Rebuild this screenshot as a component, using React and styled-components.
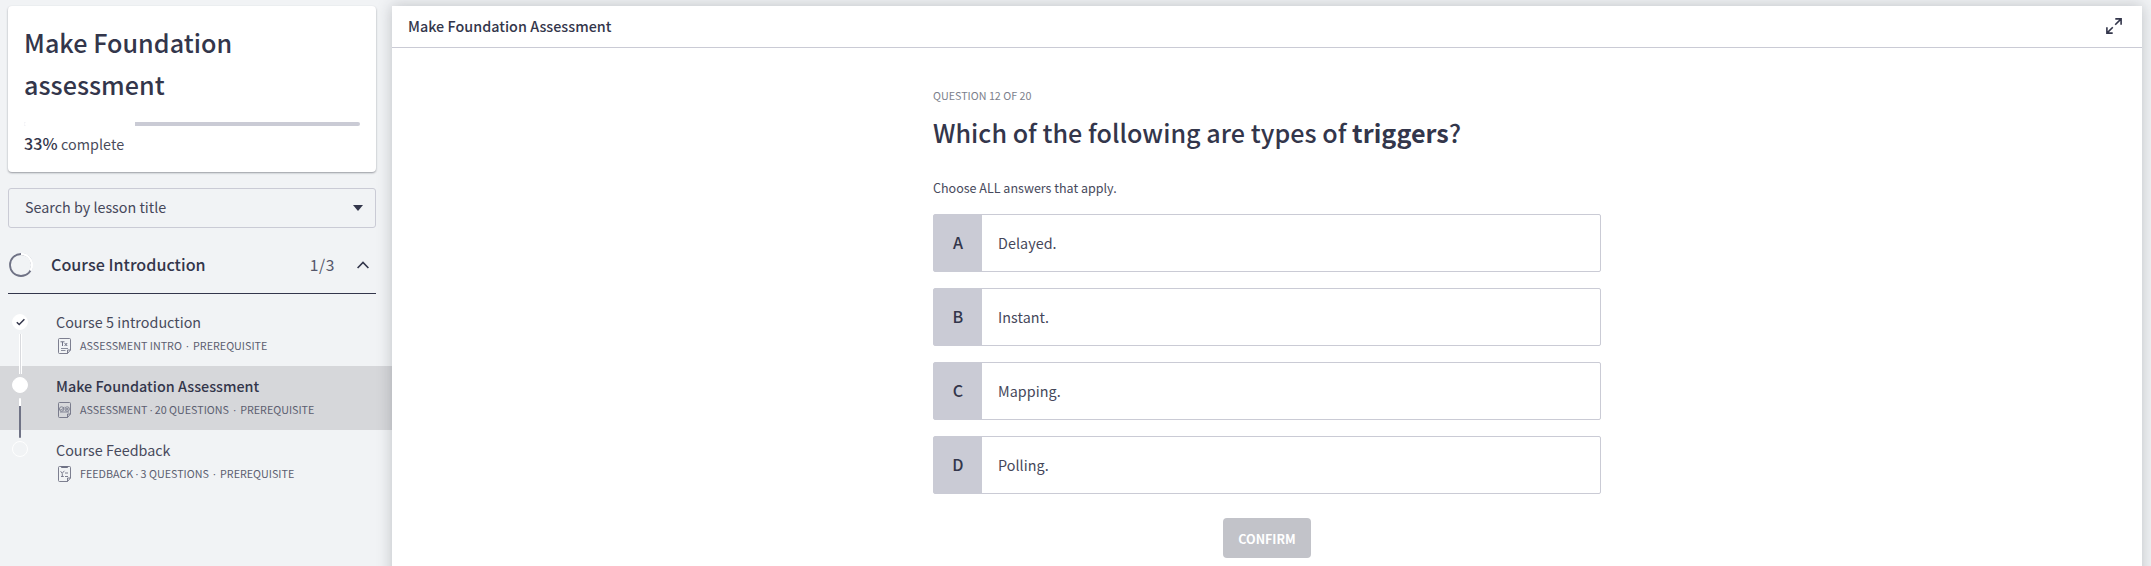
import React from "react";
import styled, { createGlobalStyle, css } from "styled-components";

const ink = "#33364b";
const muted = "#6f7285";
const line = "#cacbd5";

const Global = createGlobalStyle`
  * { box-sizing: border-box; }
  body {
    margin: 0;
    background: #f1f3f5;
    color: ${ink};
    font-family: "Noto Sans CJK SC", sans-serif;
    font-size: 14.33px;
    overflow: hidden;
  }
`;

const Page = styled.div`
  display: flex;
  height: 566px;
  padding-top: 6px;
  overflow: hidden;
`;

const Sidebar = styled.aside`
  width: 392px;
  flex: none;
`;

const Card = styled.section`
  height: 166px;
  margin: 0 16px 16px 8px;
  padding: 15px 16px 0;
  background: #fff;
  border-radius: 4px;
  box-shadow: 0 1px 2px rgba(40, 42, 55, 0.45);
`;

const CourseTitle = styled.h1`
  margin: 0 0 17px;
  width: 260px;
  font-size: 25.1px;
  line-height: 42px;
  font-weight: 500;
  letter-spacing: 0.05px;
`;

const Progress = styled.div`
  height: 4px;
  border-radius: 2px;
  overflow: hidden;
  background: ${line};
`;

const ProgressFill = styled.div`
  height: 4px;
  background: #fff;
`;

const ProgressText = styled.p`
  margin: 5px 0 0;
  line-height: 24px;
  letter-spacing: 0.06px;
  color: #4a4c5c;
  b { font-size: 16.1px; font-weight: 500; color: ${ink}; }
`;

const SearchBox = styled.div`
  display: flex;
  align-items: center;
  justify-content: space-between;
  height: 40px;
  margin: 0 16px 0 8px;
  padding: 0 12px 3px 16px;
  border: 1px solid ${line};
  border-radius: 3px;
  line-height: 22px;
  color: #45475a;
  svg { margin-top: 2px; }
`;

const SectionHead = styled.div`
  display: flex;
  align-items: center;
  height: 66px;
  margin: 0 16px 8px 8px;
  padding: 8px 7px 0 1px;
  border-bottom: 1px solid ${ink};
`;

const SectionName = styled.h2`
  flex: 1;
  margin: -2px 0 0 18px;
  font-size: 16.1px;
  line-height: 24px;
  font-weight: 500;
  letter-spacing: 0.03px;
`;

const SectionCount = styled.span`
  margin: -1px 22px 0 0;
  font-size: 15.6px;
  line-height: 24px;
  letter-spacing: 0.6px;
  color: #54566a;
`;

const Lesson = styled.div`
  display: flex;
  height: 64px;
  padding-left: 12px;
  background: ${(p) => (p.$active ? "#d6d7da" : "transparent")};
`;

const Rail = styled.div`
  display: flex;
  flex-direction: column;
  align-items: center;
  width: 16px;
  padding-top: ${(p) => (p.$first ? 12 : 11)}px;
  margin-right: 28px;
`;

const Status = styled.div`
  display: flex;
  align-items: center;
  justify-content: center;
  flex: none;
  width: 16px;
  height: 16px;
  border: 1px solid #fff;
  border-radius: 50%;
  background: ${(p) => (p.$filled ? "#fff" : "transparent")};
`;

const Track = styled.div`
  position: relative;
  z-index: 1;
  flex: none;
  width: 3px;
  height: 40px;
  margin: 4px 0 0;
  left: 0.5px;
  ${(p) =>
    p.$done
      ? css`background: #d9dade; border: solid #fff; border-width: 0 1px;`
      : css`background: linear-gradient(#fff 8px, ${muted} 8px); width: 2px; border-radius: 1px; margin-top: 5px; left: 0;`}
`;

const LessonBody = styled.div`
  padding-top: 8px;
`;

const LessonTitle = styled.div`
  line-height: 24px;
  letter-spacing: 0.02px;
  color: ${(p) => (p.$active ? ink : "#474a5c")};
  font-weight: ${(p) => (p.$active ? 500 : 400)};
`;

const Meta = styled.div`
  display: flex;
  align-items: center;
  height: 18px;
  margin: 3px 0 0 2px;
  font-size: 10.74px;
  line-height: 18px;
  color: #5b5e70;
  white-space: nowrap;
  svg { margin-right: 9px; flex: none; }
`;

const Dot = styled.span`
  display: inline-flex;
  justify-content: center;
  width: ${(p) => (p.$wide ? 11.2 : 7.4)}px;
  font-family: "Open Sans", sans-serif;
`;

const Panel = styled.main`
  width: 1750px;
  height: 580px;
  flex: none;
  background: #fff;
  box-shadow: 0 0 14px rgba(40, 42, 55, 0.25);
`;

const PanelHead = styled.header`
  display: flex;
  align-items: center;
  justify-content: space-between;
  height: 42px;
  padding: 0 20px 0 16px;
  border-bottom: 1px solid ${line};
  font-weight: 500;
  svg { margin-top: -1px; }
`;

const PanelTitle = styled.span`
  margin-top: -1px;
  line-height: 24px;
  letter-spacing: 0.03px;
`;

const Question = styled.div`
  width: 668px;
  margin: 0 auto;
  padding-top: 39px;
`;

const Counter = styled.div`
  font-size: 10.74px;
  line-height: 18px;
  color: #7c7f8c;
`;

const Prompt = styled.h2`
  margin: 4px 0 0;
  font-size: 25.1px;
  line-height: 46px;
  font-weight: 500;
  letter-spacing: 0.04px;
  white-space: nowrap;
  b { font-weight: 700; }
`;

const Hint = styled.p`
  margin: 23px 0 0;
  font-size: 12.53px;
  line-height: 20px;
  color: #474a5c;
`;

const Options = styled.div`
  display: grid;
  gap: 16px;
  margin-top: 16px;
`;

const Option = styled.div`
  display: flex;
  height: 58px;
  border: 1px solid ${line};
  border-radius: 2px;
  line-height: 56px;
  letter-spacing: 0.06px;
  color: #45475a;
`;

const Letter = styled.span`
  width: 48px;
  margin-right: 16px;
  background: ${line};
  text-align: center;
  font-size: 16.1px;
  line-height: 55px;
  font-weight: 500;
  color: ${ink};
`;

const Confirm = styled.button`
  display: block;
  width: 88px;
  height: 40px;
  margin: 24px auto 0;
  padding: 0;
  border: 0;
  border-radius: 4px;
  background: #c2c3c9;
  color: #fff;
  font: 700 12.53px "Noto Sans CJK SC", sans-serif;
`;

const ProgressRing = () => (
  <svg width="24" height="24" viewBox="0 0 24 24" fill="none" strokeWidth="1.8">
    <circle cx="12" cy="12" r="11" stroke={muted} />
    <path d="M12 1A11 11 0 0 1 21.5 17.5" stroke="#f1f3f5" strokeWidth="2.6" />
    <path d="M12 1A11 11 0 0 1 21.5 17.5" stroke="#fff" />
  </svg>
);

const Caret = () => (
  <svg width="10" height="6" viewBox="0 0 10 6"><path d="M0 0H10L5 6Z" fill={ink} /></svg>
);

const Chevron = () => (
  <svg width="12" height="8" viewBox="0 0 12 8" fill="none" stroke={ink} strokeWidth="1.6">
    <path d="M0.6 7L6 1.4L11.4 7" />
  </svg>
);

const Check = () => (
  <svg width="9" height="8" viewBox="0 0 9 8" fill="none" stroke={ink} strokeWidth="1.5">
    <path d="M0.8 4.2L3.2 6.5L8.4 1.2" />
  </svg>
);

const Expand = () => (
  <svg width="16" height="16" viewBox="0 0 16 16" fill="none" stroke={ink} strokeWidth="1.6">
    <path d="M9.3 .9H15.1V6.7M15.1 .9L9.2 6.8M6.7 15.1H.9V9.3M.9 15.1L6.8 9.2" />
  </svg>
);

const DocIcon = ({ kind }) => (
  <svg width="13" height="16" viewBox="0 0 13 16" fill="none" stroke={muted} strokeWidth="1">
    <path d="M1.5 .5H11.5Q12.5 .5 12.5 1.5V12L9.5 15.5H1.5Q.5 15.5 .5 14.5V1.5Q.5 .5 1.5 .5ZM9.5 15.5V12H12.5" strokeWidth=".9" />
    {kind === "text" && (
      <g>
        <path d="M2.5 3.8H6.5M4.5 3.8V8M6.6 5L9.2 8M9.2 5L6.6 8" />
        <path d="M3 10.5H10M3 12.5H7.5" strokeWidth=".8" />
      </g>
    )}
    {kind === "quiz" && (
      <g strokeWidth=".8">
        <circle cx="3.6" cy="7" r="2.2" />
        <circle cx="9.2" cy="7" r="2.2" />
        <path d="M2.5 7L3.5 8L6.5 4.8M8.2 6L10.2 8M10.2 6L8.2 8M2 10H11" />
      </g>
    )}
    {kind === "form" && (
      <g strokeWidth=".9">
        <path d="M3.2 1H9.8" strokeWidth="2" />
        <path d="M2.6 5.2L4.2 7.3L6.4 4.8M7 7H10M3 10.5H5.8M4.3 7.5V10.5M7 10.5H10" />
      </g>
    )}
  </svg>
);

const lessons = [
  { title: "Course 5 introduction", kind: "text", parts: ["ASSESSMENT INTRO", "PREREQUISITE"], done: true },
  { title: "Make Foundation Assessment", kind: "quiz", parts: ["ASSESSMENT", "20 QUESTIONS", "PREREQUISITE"], active: true },
  { title: "Course Feedback", kind: "form", parts: ["FEEDBACK", "3 QUESTIONS", "PREREQUISITE"] },
];

const answers = ["Delayed.", "Instant.", "Mapping.", "Polling."];

export default function App() {
  return (
    <Page>
      <Global />
      <Sidebar>
        <Card>
          <CourseTitle>Make Foundation assessment</CourseTitle>
          <Progress><ProgressFill style={{ width: "33%" }} /></Progress>
          <ProgressText><b>33%</b> complete</ProgressText>
        </Card>
        <SearchBox><span>Search by lesson title</span><Caret /></SearchBox>
        <SectionHead>
          <ProgressRing />
          <SectionName>Course Introduction</SectionName>
          <SectionCount>1/3</SectionCount>
          <Chevron />
        </SectionHead>
        {lessons.map((l, i) => (
          <Lesson key={l.title} $active={l.active}>
            <Rail $first={i === 0}>
              <Status $filled={l.done || l.active}>{l.done && <Check />}</Status>
              {i < lessons.length - 1 && <Track $done={l.done} />}
            </Rail>
            <LessonBody>
              <LessonTitle $active={l.active}>{l.title}</LessonTitle>
              <Meta>
                <DocIcon kind={l.kind} />
                {l.parts.map((p, j) => (
                  <React.Fragment key={p}>
                    {j > 0 && <Dot $wide={j === l.parts.length - 1}>·</Dot>}
                    <span>{p}</span>
                  </React.Fragment>
                ))}
              </Meta>
            </LessonBody>
          </Lesson>
        ))}
      </Sidebar>
      <Panel>
        <PanelHead><PanelTitle>Make Foundation Assessment</PanelTitle><Expand /></PanelHead>
        <Question>
          <Counter>QUESTION 12 OF 20</Counter>
          <Prompt>Which of the following are types of <b>triggers</b>?</Prompt>
          <Hint>Choose ALL answers that apply.</Hint>
          <Options>
            {answers.map((a, i) => (
              <Option key={a}><Letter>{"ABCD"[i]}</Letter>{a}</Option>
            ))}
          </Options>
          <Confirm>CONFIRM</Confirm>
        </Question>
      </Panel>
    </Page>
  );
}
